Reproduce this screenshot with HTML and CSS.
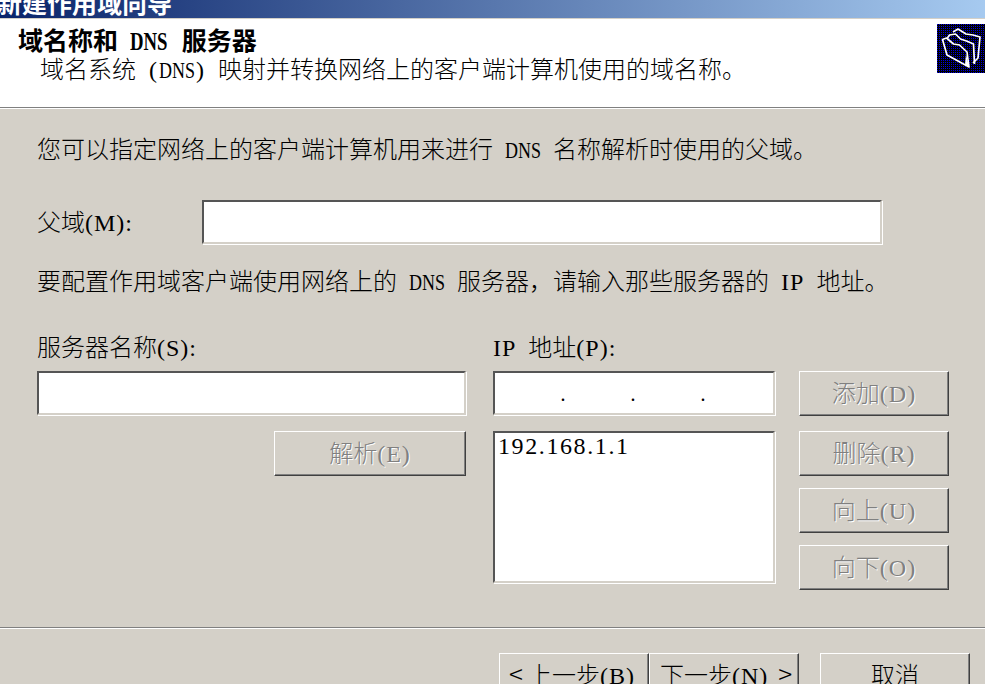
FILE: index.html
```html
<!DOCTYPE html>
<html lang="zh-CN">
<head>
  <meta charset="UTF-8">
  <title>新建作用域向导</title>
  <link rel="stylesheet" href="styles.css">
</head>
<body>
  <div class="wizard">
    <div class="title-bar"><span class="title-text">新建作用域向导</span></div>

    <div class="header">
      <div class="header-text">
        <div class="header-title">域名称和 <span class="lat">DNS</span> 服务器</div>
        <div class="header-sub">域名系统 <span class="key key-wide">(</span><span class="lat">DNS</span><span class="key key-wide">)</span> 映射并转换网络上的客户端计算机使用的域名称。</div>
      </div>
      <svg class="header-icon" width="48" height="49" viewBox="0 0 48 49">
        <defs>
          <pattern id="dots" width="2" height="2" patternUnits="userSpaceOnUse">
            <rect width="2" height="2" fill="#000"/>
            <rect width="1" height="1" fill="#0000e0"/>
          </pattern>
        </defs>
        <rect width="48" height="49" fill="url(#dots)"/>
        <g fill="none" stroke="#fff" stroke-width="1.7" stroke-linejoin="round">
          <path d="M16 8l5-3 8 5 7 1 7 2-2 21-5 5"/>
          <path d="M10.500 14l2-3 6-1 5 5 6 2 7 3 1 20"/>
          <path d="M5.500 15.500l4-1.500 7 6 6 1 7.500 7 2 15-22-12z"/>
        </g>
        <path d="M29 30l3 13-4-2z" fill="#fff"/>
      </svg>
    </div>

    <div class="content">
      <p class="line">您可以指定网络上的客户端计算机用来进行 <span class="lat">DNS</span> 名称解析时使用的父域。</p>

      <div class="parent-row">
        <label class="parent-label">父域<span class="key">(M):</span></label>
        <div class="field parent-field"></div>
      </div>

      <p class="line line-second">要配置作用域客户端使用网络上的 <span class="lat">DNS</span> 服务器&#65292;请输入那些服务器的 <span class="key">IP</span> 地址。</p>

      <div class="server-grid">
        <div class="col-name">
          <label class="col-label">服务器名称<span class="key">(S):</span></label>
          <div class="field name-field"></div>
          <div class="resolve-row">
            <button class="btn" disabled>解析<span class="key">(E)</span></button>
          </div>
        </div>

        <div class="col-ip">
          <label class="col-label"><span class="key">IP</span> 地址<span class="key">(P):</span></label>
          <div class="field ip-field"><span>.</span><span>.</span><span>.</span></div>
          <div class="field ip-list"><span class="ip-item">192.168.1.1</span></div>
        </div>

        <div class="col-buttons">
          <button class="btn" disabled>添加<span class="key">(D)</span></button>
          <button class="btn btn-delete" disabled>删除<span class="key">(R)</span></button>
          <button class="btn btn-move" disabled>向上<span class="key">(U)</span></button>
          <button class="btn btn-move" disabled>向下<span class="key">(O)</span></button>
        </div>
      </div>
    </div>

    <div class="footer">
      <button class="btn btn-active btn-back"><span class="arrow arrow-back">&lt;</span>上一步<span class="key">(B)</span></button>
      <button class="btn btn-active btn-next">下一步<span class="key">(N)</span><span class="arrow arrow-next">&gt;</span></button>
      <button class="btn btn-active btn-cancel">取消</button>
    </div>
  </div>
</body>
</html>
```

FILE: styles.css
```css
html, body {
  margin: 0;
  padding: 0;
  overflow: hidden;
}

body {
  width: 985px;
  height: 684px;
  background-color: #d4d0c8;
  color: #000;
  font-family: "Noto Sans CJK SC", sans-serif;
  font-size: 24px;
  font-weight: 300;
  word-spacing: 6.7px;
}

/* latin in the reference is half a cell wide, so squeeze or space it */
.lat, .key, .ip-item {
  font-family: "Liberation Serif", serif;
  font-weight: 400;
  line-height: 1;
}

.lat {
  display: inline-block;
  width: 36px;
  transform: scaleX(0.75);
  transform-origin: left;
  white-space: nowrap;
}

.key {
  letter-spacing: 1px;
}

.key-wide {
  padding: 0 1px;
}

.wizard {
  height: 684px;
  overflow: hidden;
}

.title-bar {
  height: 18px;
  border-bottom: 1px solid #d4d0c8;
  background: linear-gradient(to right, #0a246a, #a6caf0);
  overflow: hidden;
}

.title-text {
  display: block;
  margin: -10px 0 0 -3px;
  font-size: 25px;
  line-height: 24px;
  color: #fff;
  font-weight: 700;
}

.header {
  display: flex;
  justify-content: space-between;
  height: 88px;
  background: #fff;
  border-bottom: 1px solid #808080;
  box-shadow: 0 1px 0 #fff;
}

.header-text {
  padding: 6px 0 0 18px;
  line-height: 28px;
}

.header-title {
  font-size: 25px;
  font-weight: 700;
}

.header-title .lat {
  font-weight: 700;
  width: 39px;
}

.header-sub {
  padding-left: 22px;
}

.header-icon {
  margin-top: 5px;
  flex: none;
}

.content {
  padding: 26px 36px 0 37px;
}

.line {
  margin: 0;
  line-height: 28px;
  white-space: nowrap;
}

.parent-row {
  display: flex;
  align-items: center;
  margin-top: 38px;
}

.parent-label {
  width: 165px;
  flex: none;
  padding-bottom: 4px;
}

.field {
  box-sizing: border-box;
  background: #fff;
  border: 2px solid;
  border-color: #555 #d4d0c8 #d4d0c8 #555;
  box-shadow: 1px 1px 0 #fff;
}

.parent-field {
  width: 680px;
  height: 44px;
}

.line-second {
  margin-top: 22px;
}

.server-grid {
  display: flex;
  margin-top: 38px;
}

.col-label {
  display: block;
  height: 39px;
  line-height: 28px;
  white-space: nowrap;
}

.col-name {
  width: 429px;
  margin-right: 27px;
}

.name-field {
  height: 44px;
}

.resolve-row {
  display: flex;
  justify-content: flex-end;
  margin-top: 16px;
}

.resolve-row .btn {
  width: 192px;
}

.col-ip {
  width: 282px;
  margin-right: 24px;
}

.ip-field {
  display: flex;
  justify-content: space-between;
  height: 44px;
  padding: 0 67px 0 65px;
  line-height: 36px;
}

.ip-list {
  height: 152px;
  margin-top: 16px;
  padding: 0 3px;
  line-height: 22px;
}

.ip-item {
  font-size: 24px;
  letter-spacing: 1.600px;
}

.col-buttons {
  display: flex;
  flex-direction: column;
  padding-top: 39px;
}

.btn {
  box-sizing: border-box;
  width: 150px;
  height: 45px;
  padding: 0 0 5px;
  background: #d4d0c8;
  border: 1px solid;
  border-color: #fff #404040 #404040 #fff;
  box-shadow: inset -1px -1px 0 #808080;
  color: #808080;
  font-family: inherit;
  font-size: 24px;
  font-weight: 300;
  text-shadow: 1px 1px 0 #fff;
  white-space: nowrap;
}

.btn-delete {
  margin-top: 15px;
}

.btn-move {
  margin-top: 12px;
}

.footer {
  display: flex;
  margin-top: 37px;
  padding: 25px 0 0 499px;
  border-top: 1px solid #808080;
  box-shadow: inset 0 1px 0 #fff;
}

.btn-active {
  color: #000;
  text-shadow: none;
}

.btn-back {
  padding-left: 9px;
  text-align: left;
}

.btn-next {
  padding-left: 10px;
  text-align: left;
}

.arrow {
  display: inline-block;
  width: 14px;
  font-size: 26px;
  line-height: 1;
  text-align: center;
}

.arrow-back {
  margin-right: 5px;
}

.arrow-next {
  margin-left: 10px;
}

.btn-cancel {
  margin-left: 21px;
}
```
